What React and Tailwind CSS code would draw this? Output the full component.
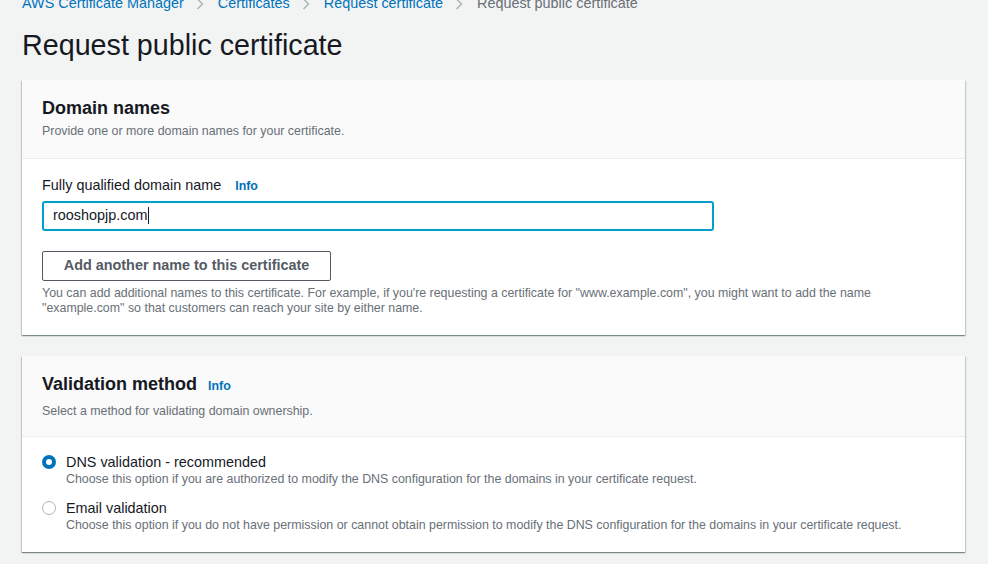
const font = { fontFamily: '"Liberation Sans", Arial, sans-serif' };

function Chevron() {
  return (
    <svg width="8" height="12" viewBox="0 0 8 12" className="mr-[14px] ml-[12px] shrink-0">
      <path d="M1.5 1 L6.5 6 L1.5 11" fill="none" stroke="#aab7b8" strokeWidth="1.5" />
    </svg>
  );
}

function Radio({ checked }) {
  if (checked) {
    return (
      <span className="mt-[2px] flex h-[14px] w-[14px] shrink-0 items-center justify-center rounded-full bg-[#0073bb]">
        <span className="h-[6px] w-[6px] rounded-full bg-white" />
      </span>
    );
  }
  return <span className="mt-[2px] h-[14px] w-[14px] shrink-0 rounded-full border-[1.5px] border-[#aab7b8] bg-white" />;
}

function Card({ title, info, subtitle, children }) {
  return (
    <div className="bg-white shadow-[0_1px_1px_0_rgba(0,28,36,0.3),1px_1px_1px_0_rgba(0,28,36,0.15),-1px_1px_1px_0_rgba(0,28,36,0.15)]">
      <div className={`border-b border-[#eaeded] bg-[#fafafa] px-5 pt-[17px] ${info ? 'pb-[17px]' : 'pb-[19px]'}`}>
        <div className="flex items-baseline">
          <h2 className="text-[18px] font-bold leading-[22px] text-[#16191f]">{title}</h2>
          {info && <a className="ml-[11px] text-[12.4px] font-bold text-[#0073bb]">Info</a>}
        </div>
        <p className={`${info ? 'mt-[8px]' : 'mt-[4px]'} text-[12.4px] leading-[16px] text-[#687078]`}>{subtitle}</p>
      </div>
      {children}
    </div>
  );
}

export default function App() {
  return (
    <div className="min-h-[564px] bg-[#f2f3f3] pl-[22px] pr-[23px] text-[#16191f]" style={font}>
      <nav className="-mt-[6px] flex h-[20px] items-center text-[14.4px]">
        <a className="text-[#0073bb]">AWS Certificate Manager</a>
        <Chevron />
        <a className="text-[#0073bb]">Certificates</a>
        <Chevron />
        <a className="text-[#0073bb]">Request certificate</a>
        <Chevron />
        <span className="text-[#687078]">Request public certificate</span>
      </nav>
      <h1 className="mt-[14px] text-[28.7px] font-light leading-[34px] text-[#16191f]">Request public certificate</h1>
      <div className="mt-[18px] flex flex-col gap-[21px] pb-[13px]">
        <Card title="Domain names" subtitle="Provide one or more domain names for your certificate.">
          <div className="px-5 pt-[17px] pb-[19px]">
            <div className="flex items-baseline">
              <label className="text-[14.4px] leading-[18px]">Fully qualified domain name</label>
              <a className="ml-[14px] text-[12.4px] font-bold text-[#0073bb]">Info</a>
            </div>
            <div className="mt-[5px] flex h-[30px] w-[672px] items-center rounded-[3px] border-2 border-[#00a1c9] bg-white pl-[9px] text-[14.4px]">
              rooshopjp.com<span className="ml-[1px] h-[17px] w-[1px] bg-[#16191f]" />
            </div>
            <button className="mt-[20px] h-[30px] w-[289px] rounded-[2px] border border-[#545b64] bg-white text-[14.4px] font-bold text-[#545b64]">
              Add another name to this certificate
            </button>
            <p className="mt-[5px] text-[12.4px] leading-[15px] text-[#687078]">
              You can add additional names to this certificate. For example, if you're requesting a certificate for "www.example.com", you might want to add the name
              <br />
              "example.com" so that customers can reach your site by either name.
            </p>
          </div>
        </Card>
        <Card title="Validation method" info subtitle="Select a method for validating domain ownership.">
          <div className="flex flex-col gap-[12px] px-5 pt-[16px] pb-[19px]">
            <label className="flex gap-[10px]">
              <Radio checked />
              <div>
                <div className="text-[14.4px] leading-[18px]">DNS validation - recommended</div>
                <div className="text-[12.4px] leading-[16px] text-[#687078]">
                  Choose this option if you are authorized to modify the DNS configuration for the domains in your certificate request.
                </div>
              </div>
            </label>
            <label className="flex gap-[10px]">
              <Radio />
              <div>
                <div className="text-[14.4px] leading-[18px]">Email validation</div>
                <div className="text-[12.4px] leading-[16px] text-[#687078]">
                  Choose this option if you do not have permission or cannot obtain permission to modify the DNS configuration for the domains in your certificate request.
                </div>
              </div>
            </label>
          </div>
        </Card>
      </div>
    </div>
  );
}
